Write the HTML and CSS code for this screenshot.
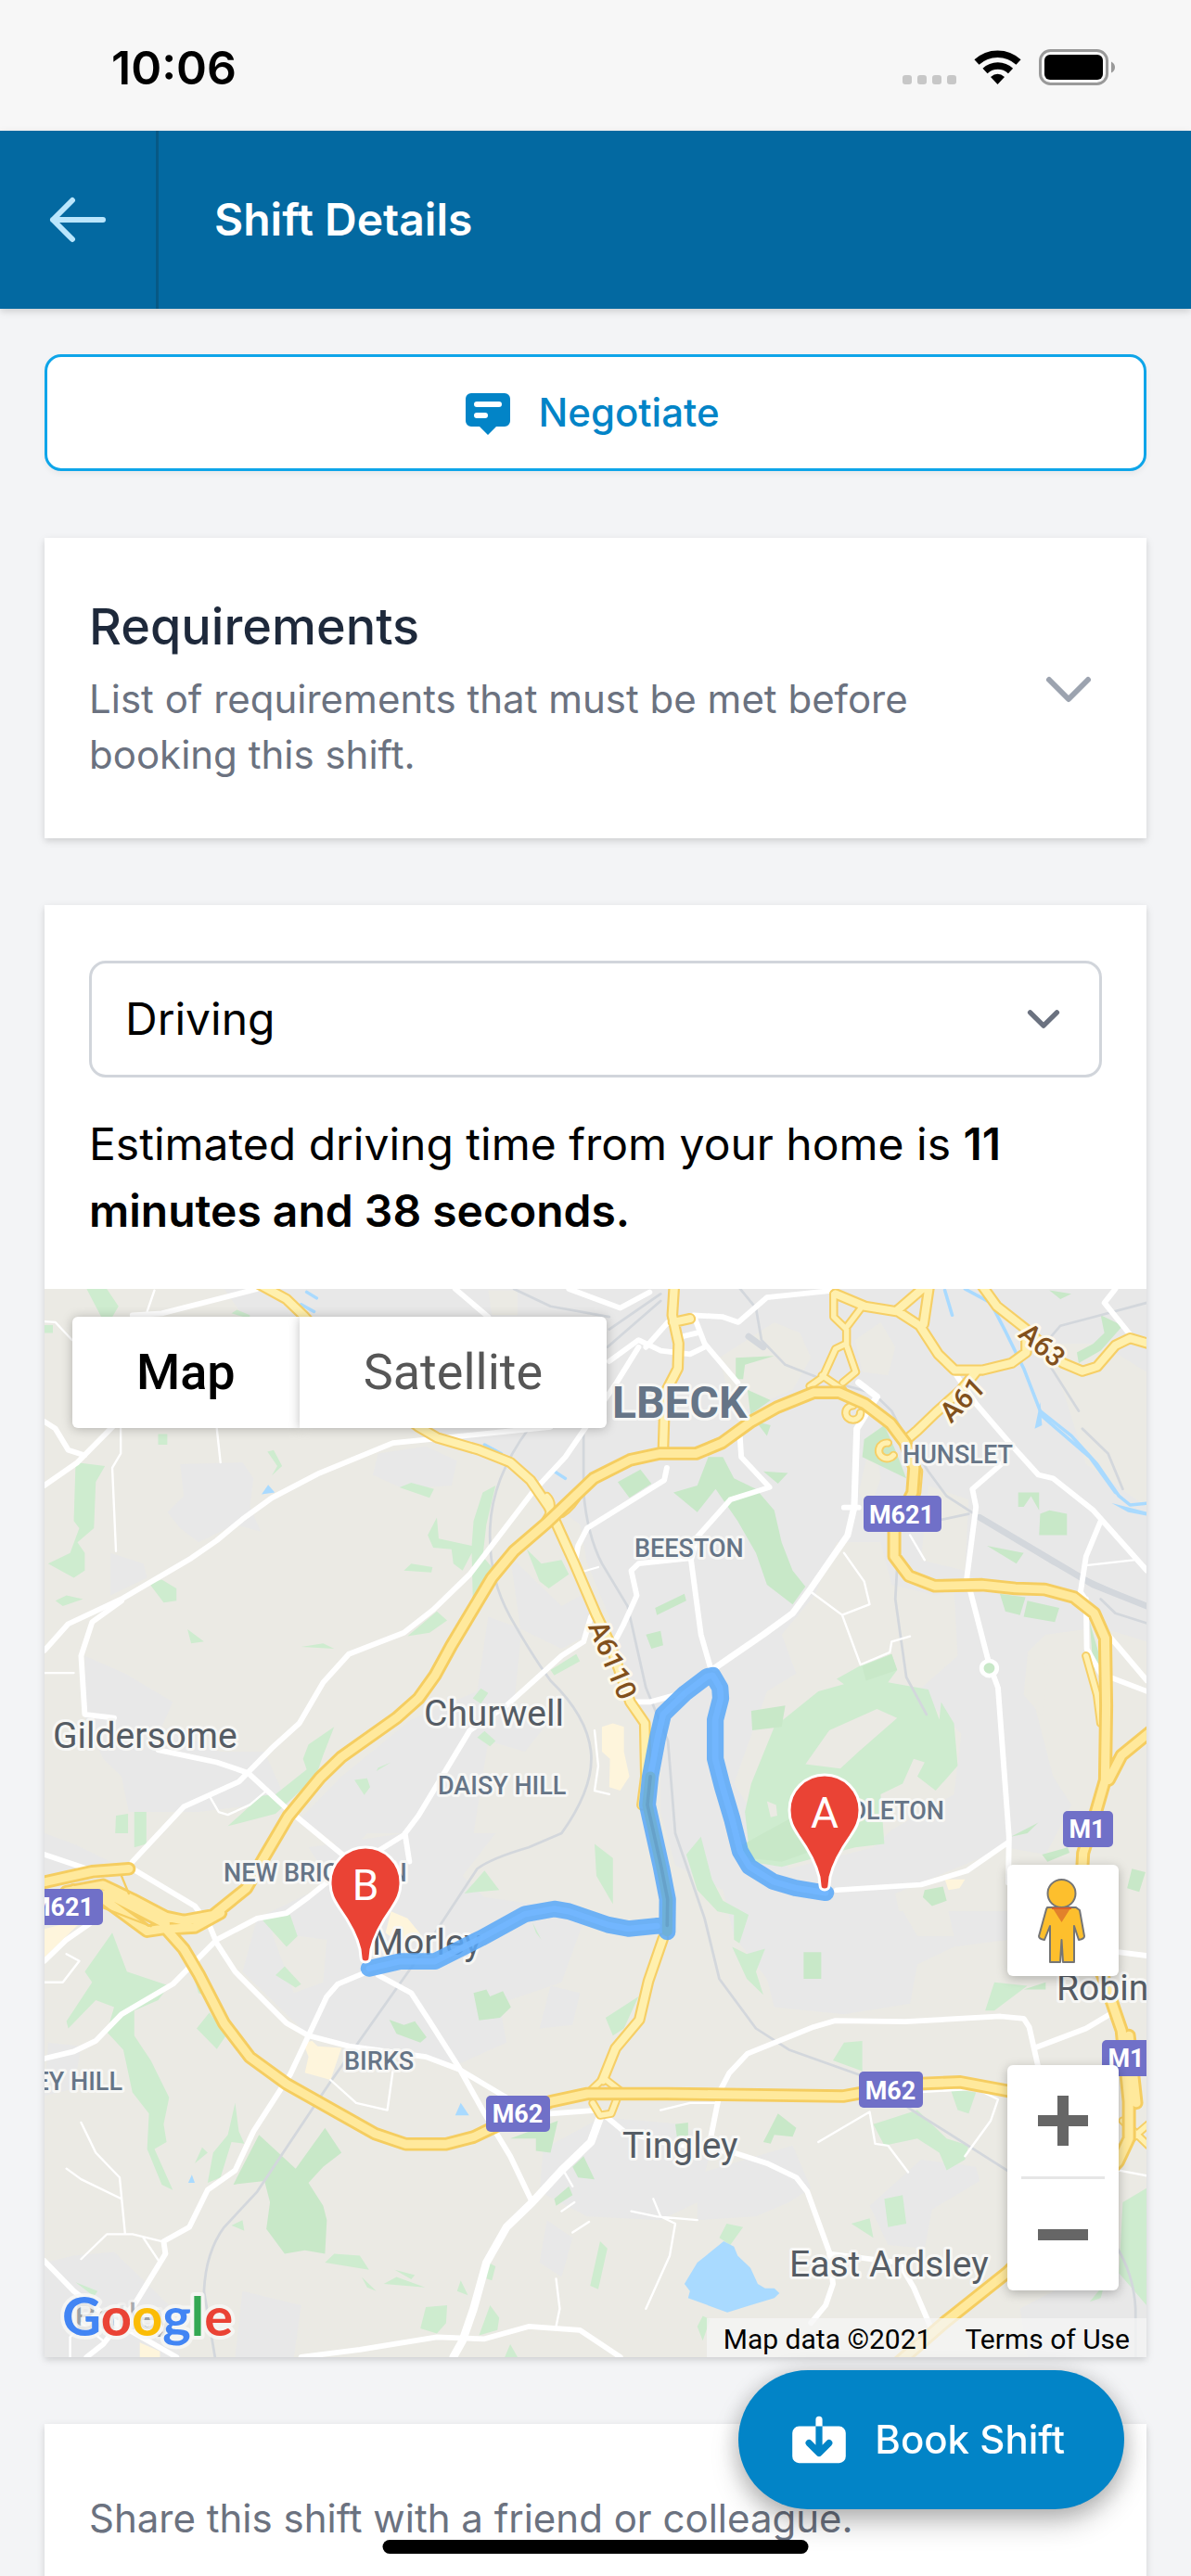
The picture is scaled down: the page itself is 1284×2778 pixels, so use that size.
FILE: index.html
```html
<!DOCTYPE html>
<html lang="en">
<head>
<meta charset="utf-8">
<meta name="viewport" content="width=device-width, initial-scale=1">
<title>Shift Details</title>
<link rel="stylesheet" href="styles.css">
</head>
<body>
<div class="app">
  <div class="status-bar">
    <span class="clock">10:06</span>
    <svg class="status-icons" width="232" height="42" viewBox="0 0 232 42" aria-hidden="true">
      <g fill="#c7c7c7">
        <rect x="3" y="29" width="10" height="10" rx="3"/><rect x="19" y="29" width="10" height="10" rx="3"/><rect x="35" y="29" width="10" height="10" rx="3"/><rect x="51" y="29" width="10" height="10" rx="3"/>
      </g>
      <g fill="none" stroke="#000" stroke-width="7.500"><path d="M83 15a33 33 0 0 1 45 0"/><path d="M92 24.500a20 20 0 0 1 27.500 0"/></g>
      <path d="M98 31q7.500-6.500 15 0l-7.500 8z"/>
      <rect x="151.500" y="2.500" width="72" height="36" rx="11" fill="none" stroke="#999" stroke-width="3"/>
      <rect x="156" y="7" width="63" height="27" rx="6"/>
      <path d="M228 14.500q4 2 4 6t-4 6z" fill="#999"/>
    </svg>
  </div>

  <header class="header">
    <button class="back" type="button" aria-label="Back">
      <svg width="72" height="72" viewBox="0 0 24 24" fill="none" stroke="currentColor" stroke-width="2" stroke-linecap="round" stroke-linejoin="round"><path d="M10 19l-7-7m0 0l7-7m-7 7h18"/></svg>
    </button>
    <h1 class="title">Shift Details</h1>
  </header>

  <main class="content">
    <button class="negotiate" type="button">
      <svg width="60" height="60" viewBox="0 0 20 20" fill="currentColor" aria-hidden="true"><path fill-rule="evenodd" clip-rule="evenodd" d="M18 13V5a2 2 0 00-2-2H4a2 2 0 00-2 2v8a2 2 0 002 2h3l3 3 3-3h3a2 2 0 002-2zM5 7a1 1 0 011-1h8a1 1 0 110 2H6a1 1 0 01-1-1zm1 3a1 1 0 100 2h3a1 1 0 100-2H6z"/></svg>
      <span>Negotiate</span>
    </button>

    <section class="card requirements">
      <div>
        <h2 class="card-title">Requirements</h2>
        <p class="card-note">List of requirements that must be met before booking this shift.</p>
      </div>
      <button class="expand" type="button" aria-label="Show requirements">
        <svg width="72" height="72" viewBox="0 0 24 24" fill="none" stroke="currentColor" stroke-width="2" stroke-linecap="round" stroke-linejoin="round"><path d="M19 9l-7 7-7-7"/></svg>
      </button>
    </section>

    <section class="card">
      <div class="travel">
        <div class="select-wrap">
          <select class="select" aria-label="Travel mode">
            <option>Driving</option>
            <option>Walking</option>
            <option>Cycling</option>
          </select>
          <svg class="select-arrow" width="72" height="72" viewBox="0 0 20 20" fill="none" stroke="currentColor" stroke-width="1.500" stroke-linecap="round" stroke-linejoin="round" aria-hidden="true"><path d="M6 8l4 4 4-4"/></svg>
        </div>
        <p class="estimate">Estimated driving time from your home is <strong>11 minutes and 38 seconds.</strong></p>
      </div>

      <div class="map">
        <svg class="map-canvas" viewBox="48 1390 1188 1152" preserveAspectRatio="xMidYMid slice" role="img" aria-label="Route from A to B">
          <rect x="48" y="1390" width="1188" height="1152" fill="#ebeae4"/>
          <g transform="translate(40 1380) scale(.3954 .3827)" stroke-linecap="round" stroke-linejoin="round">
            <!-- built-up areas -->
            <g fill="#e8e8e8">
              <path d="M510 26L560 100 700 140 1000 300 1060 420 1300 520 1360 600 1480 690 1500 800 1560 950 1600 1190 1700 1230 1700 1500 1740 1650 1870 1720 1900 1850 1990 1970 2010 2050 2200 2070 2380 2040 2400 1930 2500 1880 2720 1850 2700 1780 2350 1780 2340 1730 2640 1600 2750 1620 2820 1480 2770 1400 2720 1200 2700 1050 2750 1000 2900 980 3025 1020V26Z"/>
              <path d="M1290 780L1430 920 1500 880 1540 980 1430 1040 1310 980 1230 950 1200 1160 1020 1240 830 1400 720 1516 850 1620 900 1560 1190 1560 1230 1300 1330 1330 1400 1240 1300 1200 1320 1000Z"/>
              <path d="M740 1600L1000 1560 1250 1560 1160 1680 1220 1740 1500 1780 1430 1980 1260 2040 1280 2150 1150 2210 880 2160 740 2130 560 1950 600 1800 800 1700Z"/>
              <path d="M390 520L560 515 590 560 580 640 610 710 540 690 440 740 390 700 355 655 400 610ZM930 490L1060 470 1145 510 1130 580 1000 590 915 550ZM200 770L290 800 300 840 200 890Z"/>
              <path d="M130 1060L240 1110 370 1190 340 1260 500 1330 620 1330 680 1470 440 1500 250 1500 230 1400 180 1350 130 1230ZM20 1560L100 1590 200 1640 20 1680ZM30 2150L120 2160 100 2280 20 2300Z"/>
              <path d="M20 2770L100 2750 210 2740 300 2830 380 2910 390 3036H20ZM560 2850L720 2890 700 3036H540ZM1380 2450L1540 2360 1760 2380 1840 2440 1800 2600 1700 2650 1500 2640 1370 2570ZM1390 2650L1460 2700 1430 2810 1370 2770Z"/>
              <path d="M1800 2520L2060 2440 2110 2560 2050 2600 1960 2640 1800 2650ZM2270 2610L2410 2480 2560 2500 2570 2540 2440 2620 2420 2730 2320 2720ZM2680 2900L2900 2780 3025 2820V3036H2700ZM1400 1990L1480 2010 1460 2100 1370 2110Z"/>
            </g>
            <g fill="#ebeae4">
              <path d="M2180 740L2300 740 2330 860 2450 890 2500 870 2510 1060 2400 1160 2520 1280 2500 1450 2330 1550 2280 1600 2050 1660 1900 1420 1990 1160 2070 1110 2030 1000 2120 890Z"/>
              <path d="M2010 120L2080 150 2110 220 2060 310 1900 380 1860 220ZM2230 170L2300 120 2340 190 2320 270 2250 260ZM2740 180L2900 180 3025 260V640L2860 520 2800 320ZM2430 580L2540 620 2530 820 2410 790ZM2700 1060L2760 1090 2740 1230 2690 1170ZM2350 1760L2480 1760 2500 1850 2400 1850ZM640 1840L790 1860 780 1980 700 2010Z"/>
              <path d="M1230 30H1310V100H1240ZM2280 420L2300 560 2270 650 2240 600Z"/>
            </g>
            <!-- parks -->
            <g fill="#ceeccf">
              <path d="M135 26H190L222 75 205 105H175ZM105 515L185 525 160 570 155 700 110 740 130 770V820L100 840 30 800 90 770 115 700 100 680ZM305 855L340 845 380 870V905L345 910ZM50 905L80 890 125 900 70 920ZM410 985L455 1020 420 1025ZM720 1035L780 1025 810 1040ZM1010 1005L1090 935 1118 960 1070 995ZM1250 580L1215 600 1190 680 1185 750 1095 730 1090 670 1065 720 1080 755 1130 760 1135 800 1160 820 1185 770 1188 900 1210 890 1240 810 1215 780 1225 690ZM988 585L1020 572 1082 590 1070 615ZM1000 820L1020 800 1078 810 1075 825ZM1335 760L1375 800 1430 790 1450 830 1395 870 1370 850ZM628 485L645 480 668 525 640 552 655 525ZM330 435H355V465H330ZM530 95L545 85 580 100V110ZM20 128H43V150H20ZM215 1510L248 1505V1560H213ZM265 1500H298V1590L265 1600ZM810 1260L740 1310 725 1350 735 1380 650 1450 610 1455 520 1540 650 1505 760 1400 780 1340ZM865 1410L900 1405 908 1430 892 1452ZM925 1385L965 1360 930 1375Z"/>
              <path d="M1400 1100L1470 1055 1480 1075 1410 1115ZM1188 1180L1210 1152 1230 1165 1210 1195ZM1200 1290L1220 1272 1250 1300 1235 1315Z"/>
              <path d="M205 1840L245 1950 360 1990 330 2030 265 2060 265 2130 310 2200 360 2305 345 2380 353 2430 320 2450 370 2565 340 2550 300 2450 305 2350 260 2290 235 2170 190 2120 210 2050 160 2030 85 2110 80 2090 150 1980 130 1950ZM610 1800L690 1790 710 1850 680 1880ZM650 1960L675 1935 720 1985 705 1995ZM430 1975L440 2010 480 2030 440 1930ZM435 2110L470 2065 515 2130 490 2168ZM540 2320L550 2400 565 2435 530 2430 500 2530 465 2545 480 2460 520 2410ZM430 2490L450 2445 465 2460ZM1165 1730L1220 1665 1260 1720 1200 1725ZM1520 1590L1570 1630V1760L1525 1680ZM1350 1810L1375 1860 1360 1840Z"/>
              <path d="M810 2745L880 2750 905 2790 785 2770ZM945 2830L980 2810 1058 2840ZM975 2790L1030 2805 1020 2817ZM885 2810L925 2850 900 2840ZM530 2665L560 2650 565 2680ZM1155 2820L1175 2862 1145 2850ZM1230 2770L1250 2780 1240 2820 1225 2815ZM1060 2895L1118 2890 1115 2940 1090 2970 1045 2955ZM1235 2890L1260 2925 1255 2960 1205 2975ZM1290 3000L1310 3036H1275ZM1535 2710L1555 2730 1530 2845 1508 2835ZM105 2825L165 2850 155 2865Z"/>
              <path d="M1947 1420L2010 1260 2130 1160 2200 1140 2180 1125 2240 1090 2330 1055 2345 1100 2320 1135 2430 1155 2460 1240 2465 1190 2500 1250 2510 1370 2450 1440 2400 1400 2420 1360 2390 1350 2360 1420 2300 1450 2310 1590 2230 1600 2030 1655 1945 1640 1930 1500Z"/>
              <path d="M1770 1620L1810 1570 1840 1690 1870 1750 1940 1790 1915 1870 1900 1860 1900 1790 1855 1780 1800 1720ZM1895 1880L1935 1900 1985 1885 1960 1950 1980 2015 1935 1970ZM2170 2200L2200 2150 2250 2145V2230ZM1550 2080L1640 2020 1600 2110 1570 2130ZM2610 1980L2700 1990 2610 2060 2585 2060ZM2280 2380L2400 2340 2480 2420 2540 2440 2530 2480 2480 2510 2460 2460 2400 2420 2310 2440ZM1860 2700L1880 2660 1925 2670 1890 2720ZM2220 2660L2270 2645 2280 2700ZM2310 2590L2360 2580 2370 2660 2320 2670ZM1800 2950L1815 2920 1835 2930 1815 2990ZM2960 2600L3025 2560V2890L2950 2800ZM2870 2880L2910 2830 2900 2870ZM2490 2280L2560 2290 2540 2350 2510 2340Z"/>
            </g>
            <path fill="#ebeae4" d="M2095 1365L2160 1270 2290 1210 2345 1235 2240 1330 2190 1378ZM1990 1470L2015 1480 2018 1510 2000 1515Z"/>
            <g fill="#c8e8c8">
              <path d="M1735 600L1800 580 1830 500 1870 500 1900 560 1960 590 2010 650 2030 740 2060 820 2095 865 2060 915 1990 860 1960 770 1910 680 1850 590 1800 655ZM1583 570L1645 535 1675 575 1615 615ZM1905 220L2010 215 1930 240 1925 280 1905 280ZM1937 310L2000 340 1945 380ZM1960 400L2000 410 1990 440ZM2255 450L2310 410 2340 480 2370 560 2250 500ZM2675 600H2732V650L2710 610 2690 640H2675ZM2735 660L2760 650 2808 660V720H2732ZM2590 750L2690 770 2670 800ZM2625 885L2695 895 2680 945 2640 935ZM2700 905L2787 925 2775 965 2690 950ZM2870 965L2905 1090 2880 1100ZM1685 925L1765 885 1770 905 1690 945ZM1660 1000L1700 990 1707 1030 1675 1040ZM1947 1215L2040 1200 2030 1260 1950 1270ZM2250 1090L2330 1055 2345 1100 2260 1130ZM2835 205L2880 180 2910 150 2900 100 2960 130 2900 200 2840 235ZM2760 30L2820 40 2790 55ZM1980 540L2047 545 2020 575Z"/>
              <path d="M605 2410L705 2505 785 2390 830 2460 780 2500 740 2545 780 2610 790 2650 785 2745 730 2735 675 2745 625 2675 635 2600 620 2540 535 2550ZM1190 2010L1225 2000 1235 2020 1270 2005 1292 2050 1262 2080 1205 2087ZM960 2085L1000 2100 1030 2090 1062 2135 1045 2150 980 2125ZM1290 2420L1420 2370 1400 2460 1360 2455V2420ZM1460 2500L1490 2470 1520 2535 1475 2530ZM1410 2590L1450 2555 1460 2580 1415 2610ZM2090 1895H2138V1970H2090ZM2420 1720L2470 1710 2480 1750 2440 1765 2415 1740ZM2740 1620L2810 1600 2815 1615 2755 1640ZM2655 1570L2730 1530 2700 1560ZM2985 1660L3022 1670 3005 1725 2972 1715ZM1980 2430L2020 2350 2070 2390 2060 2415 2010 2410 2000 2435ZM2750 1980L2690 2000 2750 2000ZM1740 2380L1775 2375V2420H1745ZM1910 1600L2050 1520 2140 1600 2030 1640 1940 1630Z"/>
            </g>
            <g fill="#fef5dc">
              <path d="M725 2150L750 2145 765 2160 830 2165 800 2255 730 2235 740 2190ZM1540 1260L1570 1250 1600 1260 1600 1330 1615 1400 1590 1440 1560 1430 1562 1350 1540 1330ZM20 1830L130 1800 20 1910ZM965 1780L1010 1800 1050 1850 1000 1880 950 1840ZM2475 1690L2530 1690 2515 1715 2485 1720ZM280 2995L335 3020V3036H280Z"/>
            </g>
            <g fill="#a9daff">
              <path d="M1872 2710L1900 2725 1910 2750 1945 2785 1965 2830 1985 2842 2010 2842 2024 2856 2010 2870 1945 2890 1882 2910 1775 2870 1780 2850 1765 2830 1800 2770ZM612 605L630 578 648 600ZM1155 2320L1178 2355 1140 2355ZM422 2522L430 2545 412 2545Z"/>
              <path d="M2735 345L2740 410 2720 420ZM2930 630L3026 655V665L2975 655Z"/>
            </g>
            <g fill="none" stroke="#a9daff" stroke-width="9">
              <path d="M2530 26L2600 65 2640 145 2690 250 2735 370 2820 440 2890 520 2950 610 2980 635 3026 630M2735 380L2870 500 2940 600M2475 30L2495 100M735 35L762 52M720 70L755 90M1220 465L1265 490M1410 540L1440 560"/>
            </g>
            <!-- railways -->
            <g fill="none" stroke="#d3d7dc" stroke-width="7">
              <path d="M1300 26L1400 75 1560 105M1560 140L1700 40M1555 190L1700 60M1340 420Q1240 560 1235 700T1290 950 1400 1130Q1500 1230 1510 1330T1430 1560L1340 1600Q1240 1630 1200 1660L1060 1880 800 2260 600 2570 510 2670Q460 2740 455 2850L485 3036"/>
              <path d="M1490 430V600Q1500 720 1540 800L1610 920 1660 1150 1720 1300 1740 1560 1820 1800 1860 1970 1960 2110 2050 2170 2240 2240 2400 2350 2660 2520M1917 26L1960 80 1975 170 2040 240 2140 280 2280 320 2330 370 2360 430 2430 540 2480 610 2570 670 2770 800 3026 920M2900 900L2940 940 3026 968M3026 65L2900 100 2790 130 2740 190M2760 240L2840 370M2350 720L2340 900 2370 1120 2425 1225M2450 680L2540 660M2850 420L2920 490 2960 590M2940 2720Q2990 2800 2995 2900V3036"/>
              <path stroke-width="18" d="M2570 670L2700 750 2880 860 3026 920M1940 160L1980 190"/>
            </g>
            <!-- lanes -->
            <g fill="none" stroke="#fff" stroke-width="6">
              <path d="M20 118L50 120 95 170M228 420V490L205 530 215 765M490 420L500 515M300 90L320 30M20 1108H100M470 1455L495 1500 520 1508 580 1480 620 1445M120 2375L160 2460 225 2530 240 2690M80 2505L120 2535 230 2590M120 2760L190 2690 260 2690 340 2710M290 2700L335 2770M800 2255L870 2320 955 2340 970 2230M1520 1270L1530 1370 1520 1440 1560 1450M1480 825L1530 810M2110 880L2195 945 2245 1085 2325 1050 2330 1020 2380 1005M2195 945L2270 915 2255 850 2200 770M2380 720L2420 790M2860 805L2990 790M1700 2340L1780 2320 1850 2320M2130 2430L2270 2345 2285 2435 2320 2440 2375 2515M2400 2290L2560 2280 2620 2310 2600 2370 2530 2470M1680 2590L1700 2640 1740 2660 1725 2750 1660 2900M1620 2625L1690 2640 1800 2650M1415 2815L1425 2900 1415 2950M1435 2510L1460 2555M1430 2625L1465 2600M1460 2685L1505 2655M2950 2510L3026 2525M90 3036V2980L120 2940 180 2990M80 1900L115 1920 70 1980 20 1980"/>
            </g>
            <!-- local roads -->
            <g fill="none" stroke="#fff" stroke-width="15">
              <path d="M20 580L110 515 220 400M20 400L50 420 85 480 130 495M260 100L340 95 600 26M1140 26L1230 105M1450 26L1590 80 1670 35M230 905L150 965 120 1060 130 1225 210 1235M330 1325L490 1360 575 1390 680 1490 850 1635"/>
              <path d="M20 1045L85 970 230 900 420 785 490 735 560 675 640 615 770 545 970 460 1090 448 1400 415M260 1640L400 1485 550 1415 640 1320 715 1250 780 1135 850 1055 1000 995 1080 930 1180 830 1350 600 1440 500 1490 425 1580 290 1640 190"/>
              <path d="M1510 950L1490 1020 1430 1060 1280 1200 1180 1270 1110 1390 1040 1510 1000 1565 930 1610 800 1690 740 1740 680 1785 600 1800 490 1860 370 1985 230 2070 160 2145 100 2175 20 2195M1003 1560L1015 1640"/>
              <path d="M20 1620L150 1665M260 1660L430 1765 470 1820 490 1870 540 1950 680 2095 740 2130 850 2160 1060 2190 1150 2225 1280 2305M900 1950L820 1985 790 2020 740 2130 690 2240 590 2400 540 2510 465 2565 415 2670 345 2710 350 2745 270 2880 180 3000 135 3036M20 2765L100 2850 200 2930 380 3036M20 1920L80 1860 150 1810"/>
              <path d="M930 1960L1020 2010 1070 2090 1150 2220 1220 2350 1290 2470 1350 2600"/>
              <path stroke-width="22" d="M1535 2360L1510 2430 1430 2510 1350 2600 1280 2670 1225 2770 1190 2900 1160 2990 1135 3036"/>
              <path d="M720 3036L880 3015 1090 2980 1220 2985 1340 2950 1480 2960 1590 3036M1837 2416L1862 2286 1887 2236 1937 2181 2117 2106 2177 2088 2367 2091 2627 2076 2690 2082 2705 2106 2732 2230M2720 2165L2860 2110 2925 2070"/>
              <path d="M1400 2350L1530 2340 1600 2400 1700 2430 1900 2460 1990 2490 2070 2530 2100 2570 2160 2740 2170 2830 2150 2890 2110 2940M2160 2745L2350 2770 2390 2840 2440 2960M2947 1895L3026 1905"/>
              <path stroke-width="18" d="M1847 1095L1980 1000 2060 940 2110 870 2210 720 2228 640 2235 420 2265 370 2290 330 2240 290"/>
              <path d="M1835 1090L1810 1000 1783 790 1800 725 1890 620 1997 585 1920 500 1915 420M1910 290L1820 180 1790 100 1870 105 1912 120 1990 50 2177 30M1717 530L1710 565 1500 700 1475 750 1465 810M1780 785L1640 800 1620 820 1635 890 1600 970 1580 1010M1630 1190H1670L1760 1165M1560 230L1640 170 1700 200 1780 210 1820 190M1660 190L1720 120M1760 160L1800 150M2200 642H2240"/>
              <path d="M2507 270L2560 350 2660 470 2730 550 2770 560 2880 650 3026 820M2900 680L2860 780 2845 880 2920 1000 3026 1130M2860 900L2862 1040 2900 1110 3026 1160M2640 510L2550 590 2560 640 2535 840 2595 1080 2620 1150 2650 1570 2648 1700M2647 1586L2535 1666 2410 1705 2180 1720M2940 26L2910 65 2980 155"/>
            </g>
            <circle cx="2596" cy="1095" r="21" fill="#c8e8c8" stroke="#fff" stroke-width="12"/>
            <!-- trunk roads -->
            <g fill="none" stroke="#f6cf66" stroke-width="32">
              <path id="trunk" d="M600 10L680 55 730 105 900 300 1040 415 1090 445 1205 480 1290 515 1345 565 1395 640 1430 720 1465 800 1525 945 1560 1020 1617 1190 1657 1250 1660 1400 1650 1480M1707 1856L1667 1976 1642 2086 1577 2166 1542 2256M1737 20L1732 100 1749 180 1747 250 1712 320 1707 480M1735 120L1780 110M2177 40L2257 75 2347 90 2407 130 2457 210 2502 255 2577 255 2657 235 2697 205 2697 140 2617 75 2575 15M2347 85L2420 20M2432 20L2417 125M2377 445L2400 425 2450 375 2520 310 2560 260M2697 140L2797 235 2850 258 2890 245 2940 185 2980 165 3030 180M2400 540L2395 600"/>
            </g>
            <g fill="none" stroke="#f6cf66" stroke-width="24">
              <path id="slips" d="M2172 40V105L2207 140V185L2232 260 2197 290M2250 75L2210 130M2207 180L2177 195 2142 275 2107 300M2140 270L2197 310M2225 355a20 20 0 1 0 20 20M2320 460a22 22 0 1 0 15 35M1500 2294L1545 2250 1600 2294M1515 2320L1535 2355 1565 2350 1580 2310M2860 1060L2890 1170 2900 1250M2960 2370L3030 2440M3030 2380L2940 2460M1370 700Q1420 640 1390 610M1430 660Q1460 640 1480 600"/>
            </g>
            <use href="#slips" fill="none" stroke="#fff0b0" stroke-width="14"/>
            <use href="#trunk" fill="none" stroke="#fff0ae" stroke-width="21"/>
            <!-- motorways -->
            <g fill="none" stroke="#f5cd60" stroke-width="38">
              <path id="motorway" d="M10 1700L150 1668 250 1660M80 1725L180 1706 260 1746 350 1795 400 1806 480 1791 570 1716 620 1626 685 1512 770 1405 830 1345 980 1235 1040 1180 1085 1115 1130 1030 1240 840 1300 765 1390 685 1517 560 1617 508 1697 490 1797 490 1867 460 1947 400 2017 360 2117 318 2187 318 2257 350 2327 405 2367 460 2392 530 2387 600 2337 700 2337 780 2377 835 2447 863 2577 860 2667 870 2747 873 2827 895 2882 940 2912 1010 2915 1200 2912 1410 2887 1500 2852 1616 2842 1816 2907 1966 2957 2116 2977 2316 2977 2420 2947 2486 2647 2796 2477 2936 2350 3050M3040 1270L2957 1340 2922 1410M180 1745L300 1836 350 1828 400 1886 440 1956 510 2096 580 2191 680 2266 920 2406 1005 2436H1115L1190 2416 1250 2386 1400 2316 1500 2294H1717L2197 2301 2257 2290 2397 2266 2517 2261 2647 2286 2817 2330M350 1830L430 1825 500 1785M100 1720L200 1735 350 1815M2977 2130L2997 2320"/>
            </g>
            <use href="#motorway" fill="none" stroke="#ffe99c" stroke-width="23"/>
            <path d="M130 1750L310 1822M230 1680L250 1730" fill="none" stroke="#f5cd60" stroke-width="6"/>
          </g>

          <!-- place names -->
          <g class="place">
            <text x="57" y="1885">Gildersome</text>
            <text x="457" y="1861">Churwell</text>
            <text x="401" y="2108">Morley</text>
            <text x="1139" y="2157">Robin</text>
            <text x="671" y="2327">Tingley</text>
            <text x="851" y="2455">East Ardsley</text>
            <text class="faded" x="80" y="2512">Batley</text>
          </g>
          <g class="district">
            <text x="472" y="1935">DAISY HILL</text>
            <text x="973" y="1578">HUNSLET</text>
            <text x="684" y="1679">BEESTON</text>
            <text x="1018" y="1962" text-anchor="end">DLETON</text>
            <text x="241" y="2029">NEW BRIGHTON</text>
            <text x="371" y="2232">BIRKS</text>
            <text x="132" y="2254" text-anchor="end">EY HILL</text>
            <text class="district-large" x="660" y="1529">LBECK</text>
          </g>
          <g class="road-name">
            <text transform="translate(661 1790) rotate(67)" y="11">A6110</text>
            <text transform="translate(1124 1450) rotate(41)" y="11">A63</text>
            <text transform="translate(1037 1509) rotate(-44)" y="11">A61</text>
          </g>
          <g fill="#7070c8">
            <rect x="931" y="1613" width="84" height="39" rx="5"/><rect x="1146" y="1953" width="54" height="39" rx="5"/><rect x="27" y="2037" width="84" height="39" rx="5"/><rect x="524" y="2260" width="69" height="39" rx="5"/><rect x="926" y="2234" width="69" height="39" rx="5"/><rect x="1188" y="2200" width="54" height="39" rx="5"/>
          </g>
          <g class="shield">
            <text x="972" y="1643">M621</text>
            <text x="1172" y="1982">M1</text>
            <text x="66" y="2066">M621</text>
            <text x="558" y="2289">M62</text>
            <text x="960" y="2264">M62</text>
            <text x="1214" y="2229">M1</text>
          </g>

          <!-- route -->
          <g transform="translate(40 1380) scale(.3954 .3827)" fill="none" stroke-linecap="round" stroke-linejoin="round">
            <path opacity=".88" stroke="#5ba8f7" stroke-width="46" d="M2150 1728L2067 1714 2007 1696 1942 1654 1917 1611 1895 1520 1869 1430 1849 1350V1240L1864 1180 1862 1150 1842 1115 1827 1118 1767 1165 1707 1225 1692 1290 1672 1400 1664 1480 1677 1540 1702 1656 1719 1746 1718 1838M1700 1821H1687L1612 1829 1557 1818 1450 1780 1410 1773 1330 1788 1210 1856 1085 1921H990L905 1941"/>
            <path opacity=".9" stroke="#72b7ff" stroke-width="17" d="M2150 1728L2067 1714 2007 1696 1942 1654 1917 1611 1895 1520 1869 1430 1849 1350V1240L1864 1180 1862 1150 1842 1115 1827 1118 1767 1165 1707 1225 1692 1290 1672 1400M1690 1821L1612 1829 1557 1818 1450 1780 1410 1773 1330 1788 1210 1856 1085 1921H990L905 1941"/>
            <path stroke="#6fb0d8" stroke-width="28" d="M1672 1400L1664 1480 1677 1540 1702 1656 1719 1746 1718 1836"/>
            <path stroke="#66a1c9" stroke-width="9" d="M1672 1400L1664 1480 1677 1540 1702 1656 1719 1746 1718 1820"/>
          </g>

          <!-- pins -->
          <defs><path id="pin" d="M0-38C21-38 38-21 38 0C38 12 34 19 28 28C18 42 10 55 6 72L5 81C5 84 3 86 0 86C-3 86-5 84-5 81L-6 72C-10 55-18 42-28 28C-34 19-38 12-38 0C-38-21-21-38 0-38Z" fill="#ea4335" stroke="#fff" stroke-width="3"/></defs>
          <use href="#pin" x="889" y="1952"/>
          <use href="#pin" x="394" y="2030"/>
          <g class="pin-label">
            <text x="889" y="1971">A</text>
            <text x="394" y="2049">B</text>
          </g>
          <text class="google" x="67" y="2519"><tspan fill="#4285f4">G</tspan><tspan fill="#ea4335">o</tspan><tspan fill="#fbbc05">o</tspan><tspan fill="#4285f4">g</tspan><tspan fill="#34a853">l</tspan><tspan fill="#ea4335">e</tspan></text>
        </svg>

        <div class="map-type">
          <button class="type-button is-active" type="button">Map</button>
          <button class="type-button" type="button">Satellite</button>
        </div>

        <div class="map-controls">
          <button class="pegman" type="button" aria-label="Street View">
            <svg width="120" height="120" viewBox="0 0 120 120" aria-hidden="true">
              <g fill="#fdbf2d" stroke="#757575" stroke-width="2" stroke-linejoin="round">
                <path d="M43 46H74L78 49 83 77Q83 80 77 81L72 66V105H60L58.500 81 57 105H46V66L40 81Q34 80 34 77L42 48Z"/>
                <circle cx="58.500" cy="31" r="15"/>
              </g>
              <path d="M49 47H68L58.500 62Z" fill="#e2812b"/>
              <path d="M48 47H69" stroke="#d9602b" stroke-width="2"/>
            </svg>
          </button>
          <div class="zoom">
            <button class="zoom-button" type="button" aria-label="Zoom in"><svg width="54" height="54" viewBox="0 0 54 54"><path d="M21 0h12v21h21v12H33v21H21V33H0V21h21z" fill="#666"/></svg></button>
            <button class="zoom-button" type="button" aria-label="Zoom out"><svg width="54" height="54" viewBox="0 0 54 54"><path d="M0 21h54v12H0z" fill="#666"/></svg></button>
          </div>
        </div>

        <div class="map-legal">
          <span>Map data ©2021</span>
          <a href="#terms">Terms of Use</a>
        </div>
      </div>
    </section>

    <section class="card share">
      <p class="card-note">Share this shift with a friend or colleague.</p>
    </section>
  </main>

  <button class="book" type="button">
    <svg width="72" height="72" viewBox="0 0 20 20" fill="currentColor" aria-hidden="true"><path d="M7.707 10.293a1 1 0 10-1.414 1.414l3 3a1 1 0 001.414 0l3-3a1 1 0 00-1.414-1.414L11 11.586V6h5a2 2 0 012 2v7a2 2 0 01-2 2H4a2 2 0 01-2-2V8a2 2 0 012-2h5v5.586l-1.293-1.293zM9 4a1 1 0 012 0v2H9V4z"/></svg>
    <span>Book Shift</span>
  </button>
  <div class="home-indicator"></div>
</div>
</body>
</html>
```

FILE: styles.css
```css
*, *::before, *::after { box-sizing: border-box; }

body {
  margin: 0;
  background: #f3f4f6;
  color: #000;
  font-family: Inter, "Liberation Sans", sans-serif;
  font-size: 48px;
  line-height: 72px;
}

h1, h2, p { margin: 0; }

svg { display: block; flex: none; }

button, select {
  margin: 0;
  padding: 0;
  border: 0;
  background: none;
  color: inherit;
  font: inherit;
}

.app {
  display: flex;
  flex-direction: column;
  height: 100vh;
}

/* Status bar */
.status-bar {
  display: flex;
  flex: none;
  justify-content: space-between;
  align-items: center;
  padding: 37px 82px 32px 120px;
  background: #f7f7f7;
}

.clock {
  font-size: 50px;
  font-weight: 600;
}

/* Header */
.header {
  position: relative;
  display: flex;
  flex: none;
  height: 192px;
  background: #0369a1;
  box-shadow: 0 3px 9px rgba(0, 0, 0, .1), 0 3px 6px rgba(0, 0, 0, .06);
}

.back {
  display: grid;
  place-items: center;
  width: 171px;
  border-right: 3px solid #075985;
  color: #bae6fd;
}

.title {
  align-self: center;
  padding-left: 60px;
  color: #fff;
  font-size: 48px;
  font-weight: 600;
}

/* Scrolling content */
.content {
  display: flex;
  flex: 1;
  flex-direction: column;
  gap: 72px;
  min-height: 0;
  padding: 49px 48px 0;
  overflow-y: auto;
  scrollbar-width: none;
}

.content > * { flex: none; }

.negotiate {
  display: flex;
  justify-content: center;
  align-items: center;
  gap: 24px;
  height: 126px;
  padding-right: 12px;
  border: 3px solid #0ea5e9;
  border-radius: 18px;
  background: #fff;
  box-shadow: 0 3px 6px rgba(0, 0, 0, .05);
  color: #0284c7;
  font-size: 42px;
  font-weight: 500;
}

.card {
  background: #fff;
  box-shadow: 0 3px 9px rgba(0, 0, 0, .1), 0 3px 6px rgba(0, 0, 0, .06);
}

.requirements {
  display: flex;
  justify-content: space-between;
  align-items: center;
  gap: 48px;
  padding: 60px 48px;
}

.card-title {
  margin-bottom: 12px;
  color: #1e293b;
  font-size: 54px;
  font-weight: 500;
}

.card-note {
  color: #6b7280;
  font-size: 42px;
  line-height: 60px;
}

.expand { color: #9ca3af; }

.travel { padding: 60px 48px 48px; }

.select-wrap {
  display: grid;
  align-items: center;
  margin-bottom: 36px;
}

.select,
.select-arrow { grid-area: 1 / 1; }

.select {
  width: 100%;
  height: 126px;
  padding: 0 120px 0 36px;
  border: 3px solid #d1d5db;
  border-radius: 18px;
  background: #fff;
  appearance: none;
}

.select-arrow {
  justify-self: end;
  margin-right: 27px;
  color: #6b7280;
  pointer-events: none;
}

.estimate strong { font-weight: 600; }

.share { padding: 72px 48px; }

/* Map */
.map {
  position: relative;
  font-family: Roboto, "Liberation Sans", sans-serif;
}

.map-canvas {
  width: 100%;
  height: auto;
}

.map-canvas text {
  paint-order: stroke;
  stroke-linejoin: round;
}

.place {
  fill: #555c64;
  stroke: #f7f7f5;
  stroke-width: 6px;
  font-size: 39px;
}

.faded { opacity: .5; }

.district {
  fill: #667587;
  stroke: #f7f7f5;
  stroke-width: 6px;
  font-size: 27px;
  font-weight: 500;
}

.district-large {
  font-size: 48px;
  font-weight: 700;
}

.road-name {
  fill: #81501c;
  stroke: #fdf8ea;
  stroke-width: 6px;
  font-size: 30px;
  font-weight: 500;
  text-anchor: middle;
}

.shield {
  fill: #fff;
  font-size: 27px;
  font-weight: 700;
  text-anchor: middle;
}

.pin-label {
  fill: #fff;
  font-size: 46px;
  text-anchor: middle;
}

.google {
  stroke: rgba(247, 247, 245, .8);
  stroke-width: 8px;
  font-family: Lato, sans-serif;
  font-size: 58px;
  font-weight: 700;
}

.map-type {
  position: absolute;
  top: 30px;
  left: 30px;
  display: flex;
}

.type-button {
  height: 120px;
  padding: 0 69px;
  border-radius: 0 6px 6px 0;
  background: #fff;
  box-shadow: 0 1px 12px rgba(0, 0, 0, .25);
  color: #565656;
  font-size: 54px;
}

.type-button.is-active {
  border-radius: 6px 0 0 6px;
  color: #000;
  font-weight: 500;
}

.map-controls {
  position: absolute;
  right: 30px;
  bottom: 72px;
  display: grid;
  gap: 96px;
}

.pegman,
.zoom {
  width: 120px;
  border-radius: 6px;
  background: #fff;
  box-shadow: 0 3px 12px rgba(0, 0, 0, .25);
}

.zoom-button {
  display: grid;
  place-items: center;
  width: 90px;
  height: 120px;
  margin: 0 15px;
}

.zoom-button + .zoom-button {
  height: 123px;
  border-top: 3px solid #e6e6e6;
}

.map-legal {
  position: absolute;
  right: 0;
  bottom: 0;
  display: flex;
  color: #000;
  font-size: 30px;
  line-height: 39px;
}

.map-legal > * {
  padding: 3px 18px 0;
  background: rgba(245, 245, 245, .75);
  color: inherit;
  text-decoration: none;
}

/* Floating action */
.book {
  position: fixed;
  right: 72px;
  bottom: 72px;
  display: flex;
  align-items: center;
  gap: 24px;
  height: 150px;
  padding: 0 64px 0 51px;
  border-radius: 75px;
  background: #0284c7;
  box-shadow: 0 15px 30px rgba(0, 0, 0, .22), 0 3px 24px rgba(0, 0, 0, .18);
  color: #fff;
  font-size: 42px;
  font-weight: 500;
}

.home-indicator {
  position: fixed;
  bottom: 24px;
  left: 50%;
  width: 459px;
  height: 15px;
  border-radius: 8px;
  background: #000;
  transform: translateX(-50%);
}
```
